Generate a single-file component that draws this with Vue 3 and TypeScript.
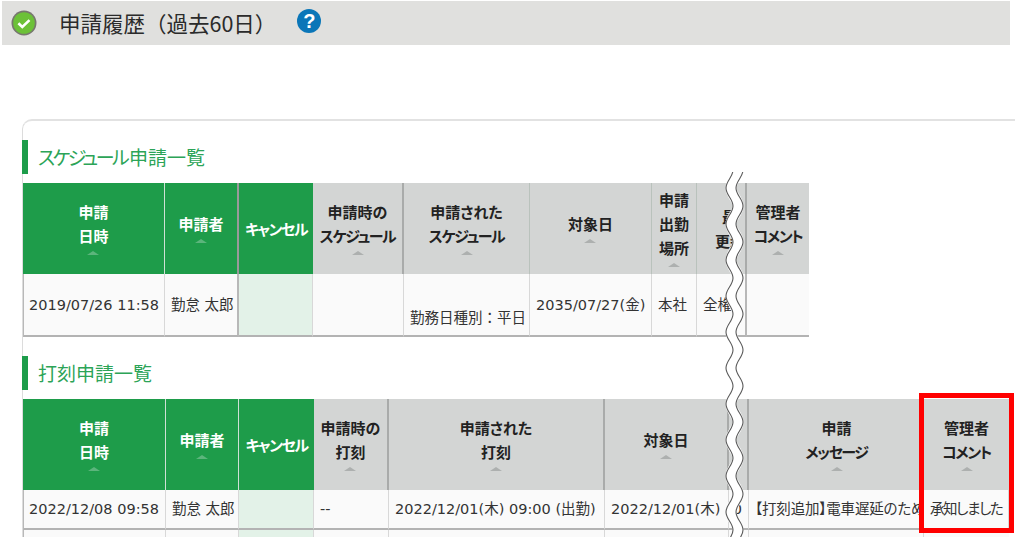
<script setup lang="ts">
interface Col { lines: string[]; arrow: boolean; kind: string; }
interface Cell { text: string[]; kind: string; }

const h = (lines: string[], kind = 'gray', arrow = true): Col => ({ lines, arrow, kind });
const c = (text: string[] | string, kind = ''): Cell => ({ text: Array.isArray(text) ? text : [text], kind });
const isKana = (s: string): boolean => /^[ァ-ヶー]+$/.test(s);

const tables = [
  {
    kana: 'スケジュール',
    title: '申請一覧',
    cls: 't1',
    head: [
      h(['申請', '日時'], 'green thin'),
      h(['申請者'], 'green thick'),
      h(['キャンセル'], 'green flat', false),
      h(['申請時の', 'スケジュール'], 'gray'),
      h(['申請された', 'スケジュール'], 'gray thin'),
      h(['対象日'], 'gray thin'),
      h(['申請', '出勤', '場所'], 'gray thin'),
      h(['最終', '更新者'], 'gray shifted', false),
      h(['管理者', 'コメント'], 'gray flat'),
    ],
    rows: [[
      c('2019/07/26 11:58', 'first'),
      c('勤怠 太郎', 'thick'),
      c('', 'cancel'),
      c(''),
      c(['\u00a0', '勤務日種別：平日'], 'sched'),
      c('2035/07/27(金)'),
      c('本社'),
      c('全権管理者', 'thick short'),
      c(''),
    ]],
  },
  {
    kana: '',
    title: '打刻申請一覧',
    cls: 't2',
    head: [
      h(['申請', '日時'], 'green thin'),
      h(['申請者'], 'green thin'),
      h(['キャンセル'], 'green flat', false),
      h(['申請時の', '打刻'], 'gray'),
      h(['申請された', '打刻'], 'gray'),
      h(['対象日'], 'gray'),
      h([''], 'gray', false),
      h(['申請', 'メッセージ'], 'gray flat'),
      h(['管理者', 'コメント'], 'gray flat'),
    ],
    rows: [
      [
        c('2022/12/08 09:58', 'first'),
        c('勤怠 太郎'),
        c('', 'cancel'),
        c('--'),
        c('2022/12/01(木) 09:00 (出勤)'),
        c('2022/12/01(木)'),
        c('0', 'right'),
        c('【打刻追加】電車遅延のため', 'msg'),
        c('承知しました', 'hira'),
      ],
      [
        c('', 'first'), c(''), c('', 'cancel'), c(''), c(''), c(''), c(''), c(''), c(''),
      ],
    ],
  },
];

// Two parallel wavy lines of the "cut" mark between columns.
const period = 36;
function wave(x: number): string {
  const amp = 3.5;
  let y = 170;
  let side = 1;
  let d = `M${x + amp} ${y}`;
  while (y < 545) {
    const ny = y + period / 2;
    d += ` C${x + amp * side} ${y + 7},${x - amp * side} ${ny - 7},${x - amp * side} ${ny}`;
    y = ny;
    side = -side;
  }
  return d;
}
const leftWave = wave(729.5);
const rightWave = wave(739.5);
</script>

<template>
  <div class="page">
    <header class="bar">
      <svg class="ok" width="26" height="26" viewBox="0 0 26 26">
        <circle cx="13" cy="13" r="12.5" fill="#77776f" />
        <circle cx="13" cy="13" r="10.8" fill="#6cc138" />
        <path d="M7.4 13.2l3.9 3.7 7.2-6.8" fill="none" stroke="#fff" stroke-width="2.6" />
      </svg>
      <h1 class="title">申請履歴（過去60日）</h1>
      <span class="help">?</span>
    </header>

    <main class="panel">
      <section v-for="t in tables" :key="t.cls" class="sec">
        <h2 class="head"><span v-if="t.kana" class="head-kana">{{ t.kana }}</span>{{ t.title }}</h2>
        <div class="grid" :class="t.cls">
          <div v-for="(col, i) in t.head" :key="i" class="th" :class="col.kind">
            <div class="th-in">
              <div v-for="l in col.lines" :key="l" class="ln" :class="{ kana: isKana(l) }">{{ l }}</div>
              <div v-if="col.arrow" class="arrow"></div>
            </div>
          </div>
          <template v-for="(row, r) in t.rows" :key="r">
            <div v-for="(cell, i) in row" :key="i" class="td" :class="cell.kind">
              <div v-for="(l, k) in cell.text" :key="k" class="tl">{{ l }}</div>
            </div>
          </template>
        </div>
      </section>
    </main>

    <svg class="cut" width="1015" height="537" viewBox="0 0 1015 537">
      <clipPath id="waveclip"><rect x="0" y="172" width="1015" height="365" /></clipPath>
      <g clip-path="url(#waveclip)">
        <path :d="leftWave" fill="none" stroke="#fff" stroke-width="11" transform="translate(5 0)" />
        <path :d="leftWave" fill="none" stroke="#5a5a5a" stroke-width="1.1" />
        <path :d="rightWave" fill="none" stroke="#5a5a5a" stroke-width="1.1" />
      </g>
    </svg>

    <div class="mark"></div>
  </div>
</template>

<style>
html, body { margin: 0; background: #fff; }
</style>

<style scoped>
.page {
  position: relative;
  width: 1015px;
  height: 537px;
  overflow: hidden;
  background: #fff;
  color: #333;
  font-family: "DejaVu Sans", "Noto Sans CJK JP", sans-serif;
  font-size: 14.5px;
}
.bar {
  display: flex;
  align-items: center;
  box-sizing: border-box;
  height: 44px;
  margin: 1px 5px 0 2px;
  padding-left: 9px;
  background: #e0e0de;
}
.ok { flex: none; }
.title {
  margin: 0 0 0 22px;
  font: 400 21.5px/1 "Noto Sans CJK JP", sans-serif;
  color: #2b2b2b;
}
.help {
  box-sizing: border-box;
  width: 24px;
  height: 24px;
  margin: -4px 0 0 21px;
  border-radius: 50%;
  background: #0a76b8;
  color: #fff;
  font: 700 20px/24px "Liberation Sans", sans-serif;
  text-align: center;
}
.panel {
  box-sizing: border-box;
  margin: 74px 0 0 22px;
  padding-top: 19px;
  border-top: 2px solid #e2e2e2;
  border-left: 1px solid #dcdcdc;
  border-top-left-radius: 10px;
  height: 500px;
}
.sec { margin-bottom: 19px; }
.head {
  box-sizing: border-box;
  height: 34px;
  margin: 0 0 9px -1px;
  padding-left: 10px;
  border-left: 6px solid #1d9c4a;
  font: 400 19px/34px "Noto Sans CJK JP", sans-serif;
  color: #2ca457;
}
.head-kana { letter-spacing: -2.6px; font-feature-settings: "palt"; margin-right: 2px; }
.grid { display: grid; }
.t1 {
  grid-template-columns: 142px 74px 74px 91px 126px 122px 45px 50px 62px;
  grid-template-rows: 91px 63px;
  width: 786px;
}
.t2 {
  grid-template-columns: 143px 73px 75px 75px 216px 124px 20px 175px 85px;
  grid-template-rows: 91px 40px 20px;
  width: 986px;
}
.th {
  box-sizing: border-box;
  display: flex;
  align-items: center;
  justify-content: center;
  overflow: hidden;
  font: 700 15px/24px "Noto Sans CJK JP", sans-serif;
  font-feature-settings: "palt";
  text-align: center;
  white-space: nowrap;
}
.kana { letter-spacing: -1.4px; }
.th.green { background: #1e9c4a; color: #fff; }
.th.gray { background: #d3d5d4; color: #222; border-right: 2px solid #a9abaa; }
.th.thin { border-right: 1px solid #b9c2bc; }
.th.green.thin { border-right: 1px solid #cfe0d5; }
.th.thick { border-right: 2px solid #9a9a9a; }
.th.flat { border-right: 0; }
.th.shifted { justify-content: flex-start; padding-left: 18px; }
.th.shifted .th-in { flex: none; width: 22px; overflow: hidden; text-align: left; }
.th.shifted .ln { overflow: hidden; }
.th.shifted .ln:first-child { padding-left: 7px; }
.arrow {
  width: 0;
  height: 0;
  margin: 3px auto 2px;
  border: 6px solid transparent;
  border-top: 0;
  border-bottom: 4px solid #adb0af;
}
.green .arrow { border-bottom-color: #5cb57c; }
.td {
  box-sizing: border-box;
  display: flex;
  flex-direction: column;
  justify-content: center;
  padding-left: 6px;
  overflow: hidden;
  background: #fafafa;
  border-right: 1px solid #d8d8d8;
  border-bottom: 2px solid #b3b3b3;
  line-height: 24px;
  color: #333;
  white-space: nowrap;
}
.td.first { border-left: 1px solid #b8b8b8; padding-left: 5px; }
.td.thick { border-right: 2px solid #b8b8b8; }
.td.cancel { background: #e3f2e8; }
.td.sched { padding-top: 2px; }
.td.right { padding: 0 6px 0 0; align-items: flex-end; }
.td.short .tl { width: 34px; overflow: hidden; }
.td.msg { font-feature-settings: "palt"; letter-spacing: -0.2px; }
.td.hira { font-feature-settings: "palt"; letter-spacing: -1.4px; }
.td:nth-last-child(1) { border-right: 0; }
.cut { position: absolute; left: 0; top: 0; pointer-events: none; }
.mark {
  position: absolute;
  left: 919px;
  top: 393px;
  box-sizing: border-box;
  width: 95px;
  height: 140px;
  border: 5px solid #f00;
}
</style>
